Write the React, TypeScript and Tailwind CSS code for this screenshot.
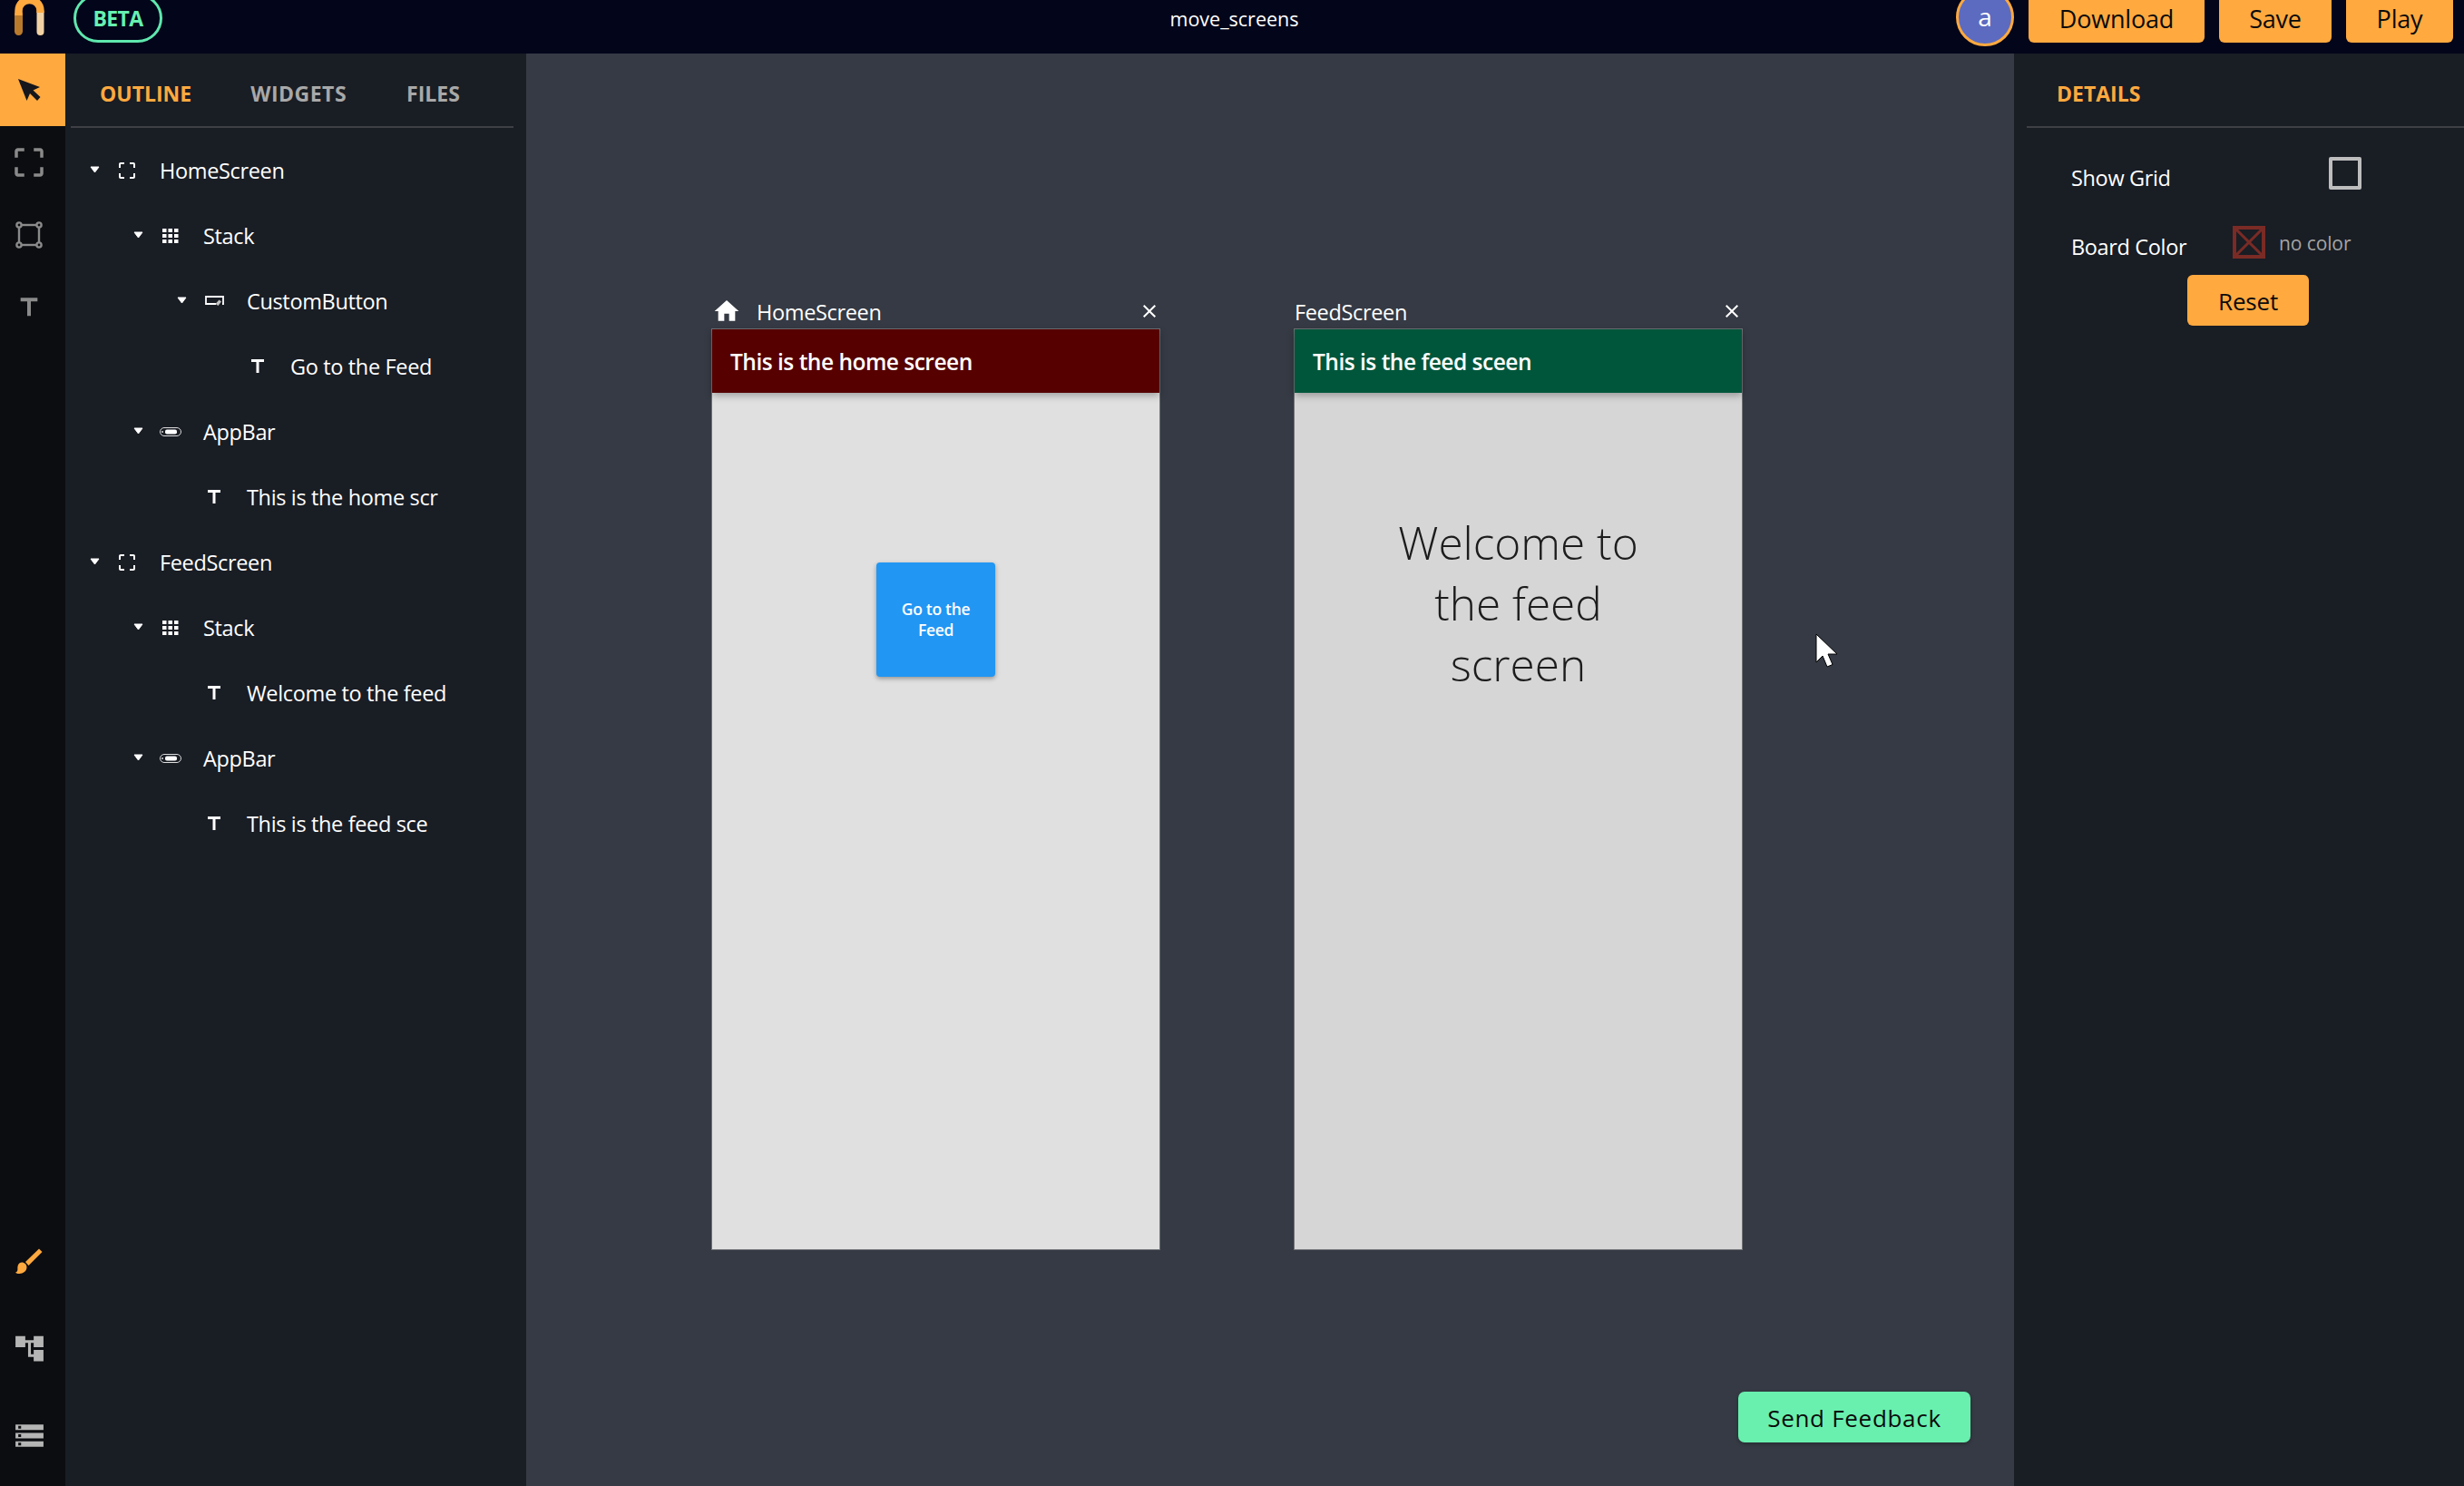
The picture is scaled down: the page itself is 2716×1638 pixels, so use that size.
import { MdHome, MdClose, MdCropFree, MdTitle, MdAccountTree, MdStorage } from "react-icons/md";

const FONT = "font-['Open_Sans','Noto_Sans',sans-serif]";

type TreeRow = { label: string; level: number; icon: "screen" | "stack" | "button" | "bar" | "text" };

const rows: TreeRow[] = [
  { label: "HomeScreen", level: 0, icon: "screen" },
  { label: "Stack", level: 1, icon: "stack" },
  { label: "CustomButton", level: 2, icon: "button" },
  { label: "Go to the Feed", level: 3, icon: "text" },
  { label: "AppBar", level: 1, icon: "bar" },
  { label: "This is the home scr", level: 2, icon: "text" },
  { label: "FeedScreen", level: 0, icon: "screen" },
  { label: "Stack", level: 1, icon: "stack" },
  { label: "Welcome to the feed", level: 2, icon: "text" },
  { label: "AppBar", level: 1, icon: "bar" },
  { label: "This is the feed sce", level: 2, icon: "text" },
];

const indent = ["pl-[27px]", "pl-[75px]", "pl-[123px]", "pl-[171px]"];

function Logo() {
  return (
    <svg width="33" height="39" viewBox="0 0 33 39" className="shrink-0">
      <path d="M4.5 34.5V16" stroke="#b97a2c" strokeWidth="9" strokeLinecap="round" fill="none" />
      <path d="M28.5 35V14" stroke="#f1d2a4" strokeWidth="8" strokeLinecap="round" fill="none" />
      <path d="M4.5 17V12C4.5 -4 28.5 -4 28.5 12V14" stroke="#ffa93f" strokeWidth="8.5" fill="none" />
    </svg>
  );
}

function TreeIcon({ icon }: { icon: TreeRow["icon"] }) {
  if (icon === "screen") return <MdCropFree size={24} className="text-white" />;
  if (icon === "text") return <MdTitle size={24} className="text-white" />;
  if (icon === "stack")
    return (
      <svg width="18" height="16" viewBox="0 0 18 16" fill="#fff">
        {[0, 6.5, 13].map((x) =>
          [0, 6, 12].map((y) => <rect key={`${x}-${y}`} x={x} y={y} width="4.5" height="4" />)
        )}
      </svg>
    );
  if (icon === "button")
    return (
      <svg width="21" height="12" viewBox="0 0 21 12" fill="none">
        <path d="M12 9H1V1h19v8h-1" stroke="#fff" strokeWidth="1.8" />
        <path d="M11.5 9l4-4.5 2.5 2-3.5 4.5z" fill="#c4c4c4" />
      </svg>
    );
  return (
    <svg width="24" height="10" viewBox="0 0 24 10" fill="none">
      <rect x="0.5" y="0.5" width="23" height="9" rx="4.5" stroke="#ddd" />
      <rect x="6" y="2.5" width="13" height="5" rx="2" fill="#fff" />
      <circle cx="3" cy="5" r="1" fill="#ddd" />
    </svg>
  );
}

function Caret() {
  return (
    <svg width="11" height="8" viewBox="0 0 11 8" className="mb-[2px]">
      <path d="M1 1h9L5.5 7z" fill="#fff" stroke="#fff" strokeLinejoin="round" />
    </svg>
  );
}

function Row({ row }: { row: TreeRow }) {
  return (
    <div className={`flex h-[72px] items-center ${indent[row.level]}`}>
      <div className="w-[11px] shrink-0">{row.icon !== "text" && <Caret />}</div>
      <div className="flex w-[60px] shrink-0 justify-center">
        <TreeIcon icon={row.icon} />
      </div>
      <span className="ml-[6px] whitespace-nowrap pt-[2px] text-[23.5px] font-normal tracking-[-0.35px] text-white">{row.label}</span>
    </div>
  );
}

function TopButton({ label, width }: { label: string; width: string }) {
  return (
    <button className={`flex h-[56px] ${width} items-center justify-center rounded-[6px] bg-[#ffa93f] pt-[2px] text-[27px] leading-none tracking-[-0.2px] text-[#0b0b0b]`}>
      {label}
    </button>
  );
}

function RailSlot({ height, children }: { height: string; children: React.ReactNode }) {
  return <div className={`flex ${height} w-full items-center justify-center pr-[8px]`}>{children}</div>;
}

function ScreenFrame({
  title,
  home,
  barColor,
  barText,
  bodyColor,
  children,
}: {
  title: string;
  home?: boolean;
  barColor: string;
  barText: string;
  bodyColor: string;
  children: React.ReactNode;
}) {
  return (
    <div className="flex w-[495px] flex-col">
      <div className="flex h-[32px] items-center pb-[2px] text-white">
        {home && <MdHome size={32} className="ml-[1px] mr-[17px] mb-[5px] shrink-0" />}
        <span className={`${home ? "" : "ml-[1px]"} text-[23.5px] font-normal tracking-[-0.35px]`}>{title}</span>
        <MdClose size={24} className="ml-auto mb-[5px] shrink-0" />
      </div>
      <div className={`relative h-[1016px] border border-[#6f7276] ${bodyColor}`}>
        <div className={`flex h-[70px] items-center pl-[20px] pt-[2px] text-[24.5px] font-semibold tracking-[-0.5px] text-white shadow-[0_3px_8px_rgba(0,0,0,0.3)] ${barColor}`}>
          {barText}
        </div>
        {children}
      </div>
    </div>
  );
}

export default function App() {
  return (
    <div className={`relative flex h-[1638px] w-[2716px] flex-col overflow-hidden bg-[#353a44] ${FONT}`}>
      <header className="flex h-[59px] shrink-0 items-end bg-[#03051a] pb-[12px] pl-[16px] pr-[12px]">
        <div className="flex self-start">
          <Logo />
        </div>
        <div className="ml-[32px] flex h-[54px] w-[98px] shrink-0 items-center justify-center rounded-full border-[3.5px] border-[#5fe8ae] text-[23px] font-bold leading-none text-[#66f0b0]">
          <span className="tracking-[-0.6px]">BETA</span>
        </div>
        <div className="flex-1 self-center pl-[386px] text-center text-[21.5px] font-normal leading-none text-white">
          <span className="relative -top-[3px]">move_screens</span>
        </div>
        <div className="-mb-[4px] mr-[16px] flex h-[64px] w-[64px] shrink-0 items-center justify-center rounded-full border-[3px] border-[#ffa93f] bg-[#5c6bc0] pb-[2px] text-[28px] leading-none text-white">
          a
        </div>
        <div className="flex gap-[16px]">
          <TopButton label="Download" width="w-[194px]" />
          <TopButton label="Save" width="w-[124px]" />
          <TopButton label="Play" width="w-[118px]" />
        </div>
      </header>

      <div className="flex min-h-0 flex-1">
        <aside className="flex w-[72px] shrink-0 flex-col bg-[#0c0d11] pb-[8px]">
          <div className="bg-[#ffa93f]">
            <RailSlot height="h-[80px]">
              <svg width="25" height="24" viewBox="0 0 25 24">
                <path d="M0 0L24 9l-7.5 3.5L24.5 20 21 24l-8-8-3.5 8z" fill="#15171c" />
              </svg>
            </RailSlot>
          </div>
          <div className="text-[#8a8a8a]">
            <RailSlot height="h-[80px]">
              <MdCropFree size={42} />
            </RailSlot>
            <RailSlot height="h-[80px]">
              <svg width="30" height="30" viewBox="0 0 30 30" fill="none" stroke="#8a8a8a" strokeWidth="2.4">
                <rect x="4" y="4" width="22" height="22" />
                <circle cx="4" cy="4" r="2.6" fill="#0c0d11" />
                <circle cx="26" cy="4" r="2.6" fill="#0c0d11" />
                <circle cx="4" cy="26" r="2.6" fill="#0c0d11" />
                <circle cx="26" cy="26" r="2.6" fill="#0c0d11" />
              </svg>
            </RailSlot>
            <RailSlot height="h-[80px]">
              <MdTitle size={32} />
            </RailSlot>
          </div>
          <div className="mt-auto">
            <RailSlot height="h-[96px]">
              <svg width="30" height="29" viewBox="0 0 30 29">
                <path d="M11 15L26 0.5 29.5 4 14.5 19z" fill="#ffa93f" />
                <path d="M7 15.5c3 0 5.5 2.3 5.5 5.3 0 4.5-4 7.2-8.2 7.2C2.5 28 1 27.6 0 26.8c2 -.6 2.5 -2 2.4 -4.2-.2 -4 1.5 -7.1 4.6 -7.1z" fill="#ffa93f" />
              </svg>
            </RailSlot>
            <RailSlot height="h-[96px]">
              <MdAccountTree size={37} className="text-[#b5b5b5]" />
            </RailSlot>
            <RailSlot height="h-[96px]">
              <MdStorage size={37} className="text-[#b5b5b5]" />
            </RailSlot>
          </div>
        </aside>

        <section className="w-[508px] shrink-0 bg-[#191d24]">
          <div className="ml-[6px] mr-[14px] flex h-[82px] items-center border-b-2 border-[#3f4045] pl-[32px] pt-[8px] text-[23px] font-bold">
            <span className="text-[#ffa93f]">OUTLINE</span>
            <span className="ml-[65px] tracking-[0.5px] text-[#a8a8a8]">WIDGETS</span>
            <span className="ml-[66px] text-[#a8a8a8]">FILES</span>
          </div>
          <div className="pt-[11px]">
            {rows.map((r, i) => (
              <Row key={i} row={r} />
            ))}
          </div>
        </section>

        <main className="relative flex min-w-0 flex-1 items-start gap-[147px] pl-[204px] pt-[271px]">
          <ScreenFrame title="HomeScreen" home barColor="bg-[#560000]" barText="This is the home screen" bodyColor="bg-[#e0e0e0]">
            <div className="flex justify-center pt-[187px]">
              <div className="flex h-[126px] w-[131px] items-center justify-center rounded-[4px] bg-[#2196f3] text-center text-[17.5px] font-semibold leading-[23px] tracking-[-0.3px] text-white shadow-[0_2px_5px_rgba(0,0,0,0.35)]">
                Go to the
                <br />
                Feed
              </div>
            </div>
          </ScreenFrame>
          <ScreenFrame title="FeedScreen" barColor="bg-[#00563b]" barText="This is the feed sceen" bodyColor="bg-[#d6d6d6]">
            <div className="pt-[132px] text-center text-[49.5px] font-light leading-[67px] text-[#1c1c1c]">
              Welcome to
              <br />
              the feed
              <br />
              screen
            </div>
          </ScreenFrame>

          <svg width="25" height="38" viewBox="0 0 25 38" className="absolute left-[1421px] top-[639px]">
            <path d="M1 1v31l7-7 5 12 6-2.5-5-11.5h10z" fill="#fff" stroke="#000" strokeWidth="1" />
          </svg>

          <button className="absolute bottom-[48px] right-[48px] flex h-[56px] w-[256px] items-center justify-center rounded-[7px] bg-[#69f0ae] pt-[2px] text-[26px] leading-none tracking-[0.7px] text-[#0b0b0b] shadow-[0_2px_4px_rgba(0,0,0,0.25)]">
            Send Feedback
          </button>
        </main>

        <aside className="w-[496px] shrink-0 bg-[#191d24]">
          <div className="ml-[14px] flex h-[82px] items-center border-b-2 border-[#3f4045] pl-[33px] pt-[8px] text-[23px] font-bold text-[#ffa93f]">
            DETAILS
          </div>
          <div className="flex h-[90px] items-center pl-[63px] pt-[22px] text-[23.5px] font-normal tracking-[-0.35px] text-white">
            <span className="w-[284px]">Show Grid</span>
            <span className="-mt-[12px] h-[36px] w-[36px] rounded-[2px] border-[4px] border-[#bdbdbd]" />
          </div>
          <div className="flex h-[64px] items-center pl-[63px] pt-[20px] text-[23.5px] font-normal tracking-[-0.35px] text-white">
            <span className="w-[178px]">Board Color</span>
            <svg width="36" height="36" viewBox="0 0 36 36" className="-mt-[12px]">
              <rect x="2" y="2" width="32" height="32" fill="none" stroke="#7a2b25" strokeWidth="4" />
              <path d="M2 2l32 32M34 2L2 34" stroke="#7a2b25" strokeWidth="3" />
            </svg>
            <span className="-mt-[8px] ml-[15px] text-[21px] font-normal tracking-[-0.1px] text-[#a5a5a5]">no color</span>
          </div>
          <div className="pl-[191px] pt-[8px]">
            <button className="flex h-[56px] w-[134px] items-center justify-center rounded-[6px] bg-[#ffa93f] pt-[2px] text-[26px] leading-none tracking-[-0.2px] text-[#0b0b0b]">
              Reset
            </button>
          </div>
        </aside>
      </div>
    </div>
  );
}
